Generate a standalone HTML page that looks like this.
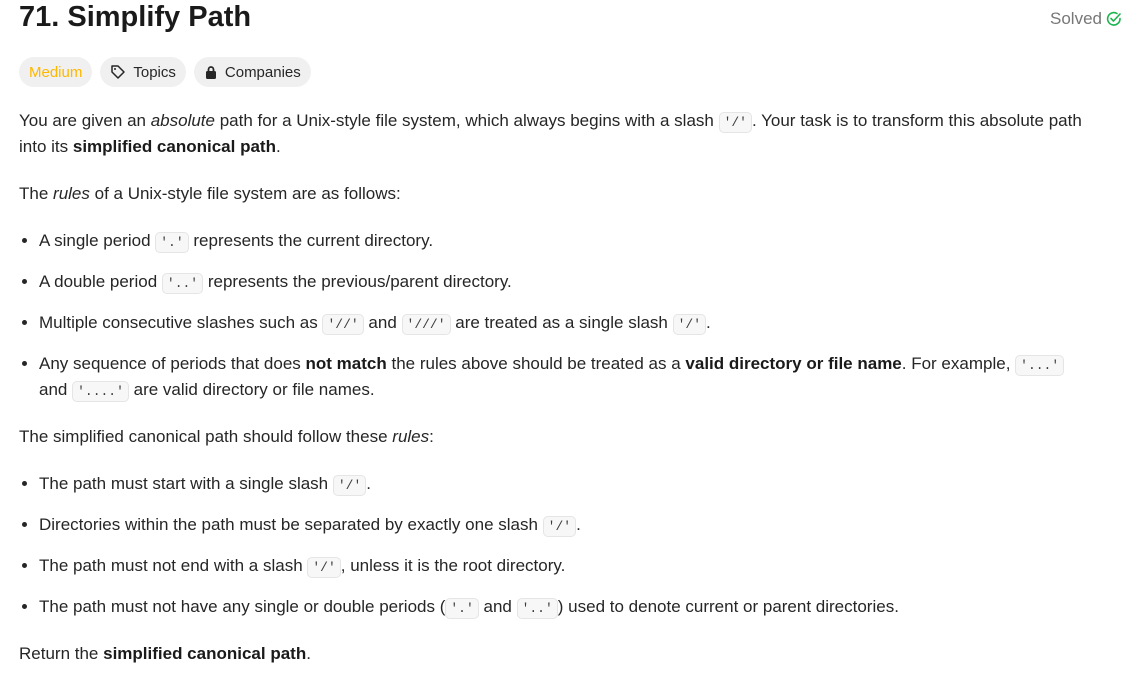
<!DOCTYPE html>
<html><head><style>
body{margin:0;background:#fff;font-family:"Liberation Sans",sans-serif;color:#262626;font-size:17px;}
.wrap{padding:0 19px;position:relative;width:1103px;}
h1{margin:0;position:absolute;top:1px;left:19px;font-size:29px;font-weight:bold;color:#1a1a1a;}
.solved{position:absolute;top:9px;right:19px;color:#777;font-size:17px;display:flex;align-items:center;gap:4px;}
.tags{position:absolute;top:57px;left:19px;display:flex;gap:8px;}
.tag{background:#f0f0f0;border-radius:15px;height:30px;padding:0 10px;display:flex;align-items:center;gap:7px;font-size:15px;color:#262626;}
.content{position:absolute;top:108px;left:19px;width:1074px;line-height:26px;}
p{margin:0 0 21px 0;}
ul{margin:0 0 21px 0;padding-left:20px;}
li{margin-bottom:15px;}
code{font-family:"Liberation Mono",monospace;font-size:13px;line-height:16px;background:#f7f7f7;border:1px solid #e5e5e5;border-radius:5px;padding:2px 4px;color:#3c3c3c;}
b{color:#1a1a1a;}
</style></head><body>
<div class="wrap">
<h1>71. Simplify Path</h1>
<div class="solved">Solved <svg width="16" height="16" viewBox="0 0 16 16"><path d="M14 7.5A6.2 6.2 0 1 1 11 2.5" fill="none" stroke="#1db34f" stroke-width="1.6" stroke-linecap="round"/><path d="M5 7.5l2.5 2.5L14 3" fill="none" stroke="#1db34f" stroke-width="1.6" stroke-linecap="round" stroke-linejoin="round"/></svg></div>
<div class="tags">
<div class="tag" style="color:#ffb800">Medium</div>
<div class="tag"><svg width="16" height="16" viewBox="0 0 16 16"><path d="M2 2h6l6 6-6 6-6-6z" fill="none" stroke="#262626" stroke-width="1.5" stroke-linejoin="round"/><circle cx="5" cy="5" r="1" fill="#262626"/></svg>Topics</div>
<div class="tag"><svg width="14" height="14" viewBox="0 0 14 14"><rect x="2" y="6" width="10" height="8" rx="1.5" fill="#262626"/><path d="M4.5 6V4.5a2.5 2.5 0 0 1 5 0V6" fill="none" stroke="#262626" stroke-width="1.8"/></svg>Companies</div>
</div>
<div class="content">
<p>You are given an <i>absolute</i> path for a Unix-style file system, which always begins with a slash <code>'/'</code>. Your task is to transform this absolute path into its <b>simplified canonical path</b>.</p>
<p>The <i>rules</i> of a Unix-style file system are as follows:</p>
<ul>
<li>A single period <code>'.'</code> represents the current directory.</li>
<li>A double period <code>'..'</code> represents the previous/parent directory.</li>
<li>Multiple consecutive slashes such as <code>'//'</code> and <code>'///'</code> are treated as a single slash <code>'/'</code>.</li>
<li>Any sequence of periods that does <b>not match</b> the rules above should be treated as a <b>valid directory or file name</b>. For example, <code>'...'</code> and <code>'....'</code> are valid directory or file names.</li>
</ul>
<p>The simplified canonical path should follow these <i>rules</i>:</p>
<ul>
<li>The path must start with a single slash <code>'/'</code>.</li>
<li>Directories within the path must be separated by exactly one slash <code>'/'</code>.</li>
<li>The path must not end with a slash <code>'/'</code>, unless it is the root directory.</li>
<li>The path must not have any single or double periods (<code>'.'</code> and <code>'..'</code>) used to denote current or parent directories.</li>
</ul>
<p>Return the <b>simplified canonical path</b>.</p>
</div>
</div>
</body></html>
